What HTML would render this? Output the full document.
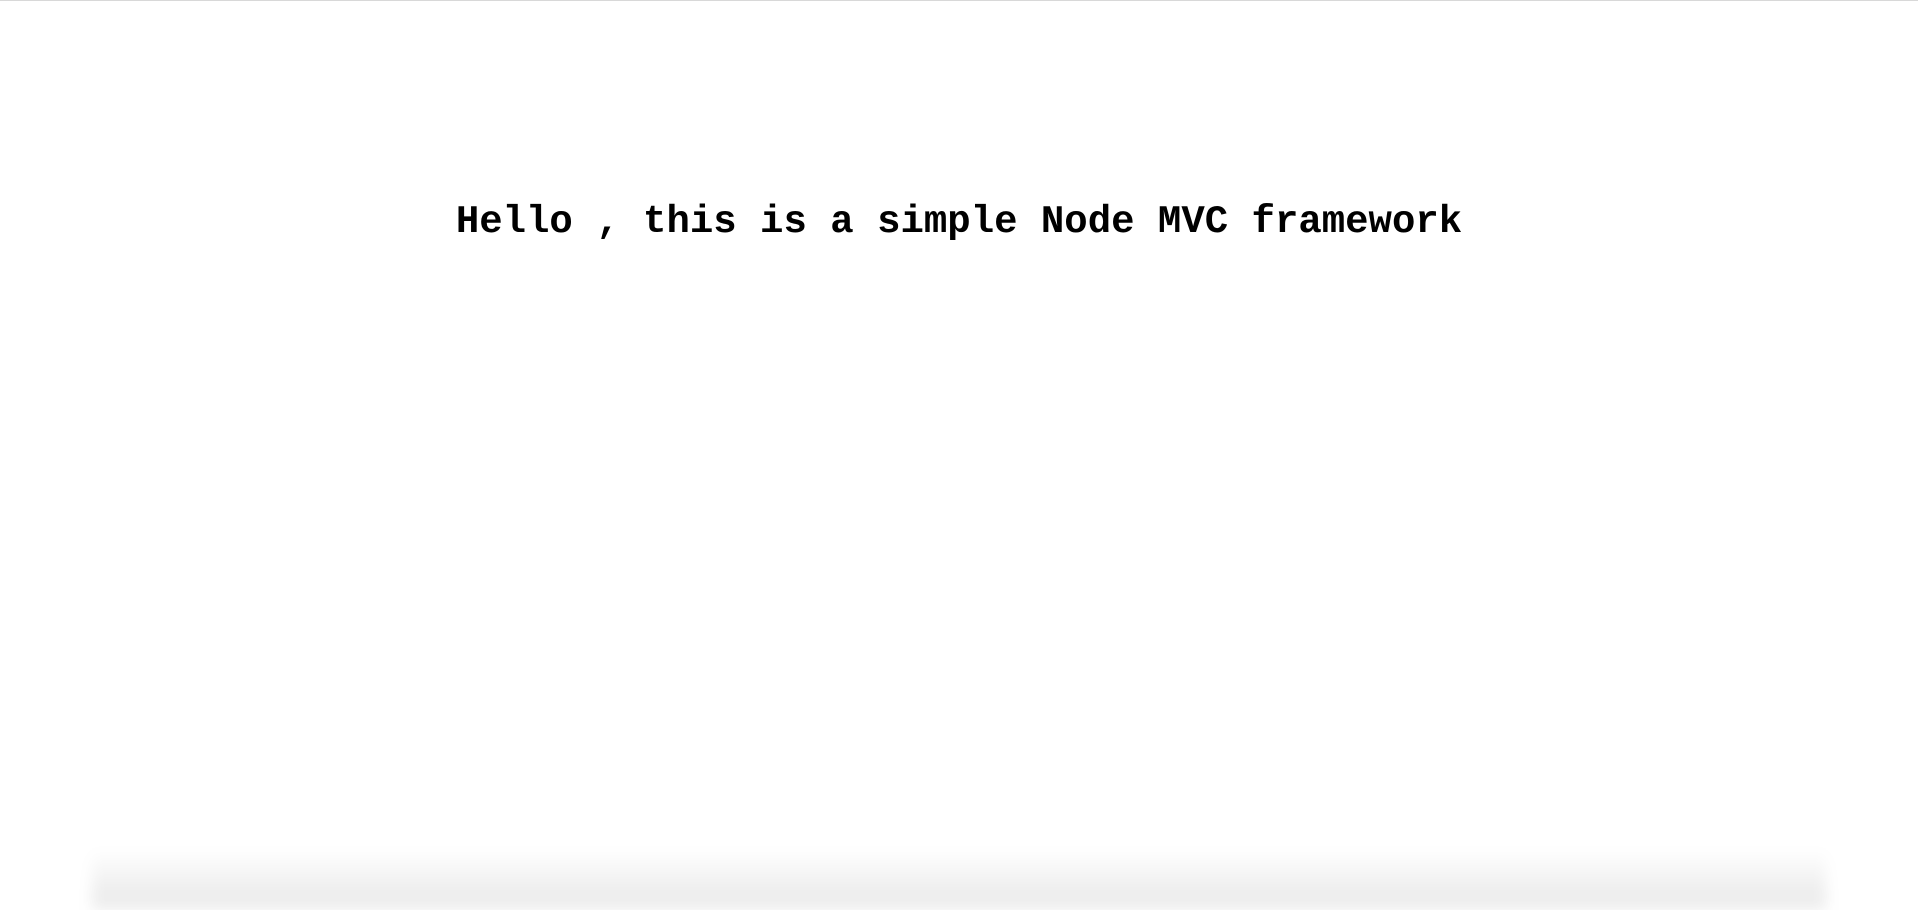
<!DOCTYPE html>
<html><head><style>
html,body{margin:0;padding:0;width:1918px;height:891px;overflow:hidden;background:#fff;}
.top{position:absolute;left:0;top:0;width:1918px;height:1px;background:#d8d8d8;}
h1{position:absolute;left:0;top:203px;width:1918px;margin:0;text-align:center;font:bold 39px/39px "Liberation Mono",monospace;color:#000;white-space:pre;}
.sh{position:absolute;left:92px;width:1734px;top:850px;height:60px;background:linear-gradient(to bottom,rgba(0,0,0,0),rgba(0,0,0,0.07) 70%);filter:blur(7px);}
</style></head><body>
<div class="top"></div>
<h1>Hello , this is a simple Node MVC framework</h1>
<div class="sh"></div>
</body></html>
